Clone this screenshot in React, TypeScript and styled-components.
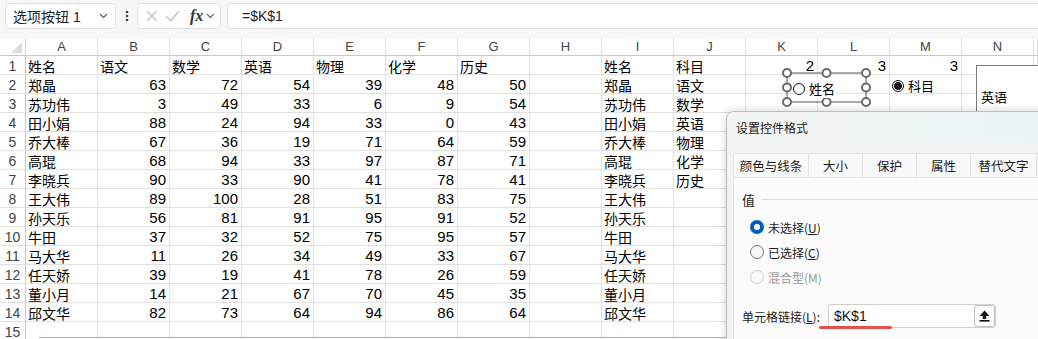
import styled, { createGlobalStyle } from 'styled-components';

const GlobalStyle = createGlobalStyle`
  html, body {
    margin: 0;
    padding: 0;
    background: #fff;
    overflow: hidden;
  }
  body {
    font-family: "Liberation Sans", "Noto Sans CJK SC", sans-serif;
    color: #000;
  }
`;

const COLS = ['A', 'B', 'C', 'D', 'E', 'F', 'G', 'H', 'I', 'J', 'K', 'L', 'M', 'N'];
const SUBJECTS = ['语文', '数学', '英语', '物理', '化学', '历史'];

const ROWS: [string, ...number[]][] = [
  ['郑晶', 63, 72, 54, 39, 48, 50],
  ['苏功伟', 3, 49, 33, 6, 9, 54],
  ['田小娟', 88, 24, 94, 33, 0, 43],
  ['乔大棒', 67, 36, 19, 71, 64, 59],
  ['高琨', 68, 94, 33, 97, 87, 71],
  ['李晓兵', 90, 33, 90, 41, 78, 41],
  ['王大伟', 89, 100, 28, 51, 83, 75],
  ['孙天乐', 56, 81, 91, 95, 91, 52],
  ['牛田', 37, 32, 52, 75, 95, 57],
  ['马大华', 11, 26, 34, 49, 33, 67],
  ['任天娇', 39, 19, 41, 78, 26, 59],
  ['董小月', 14, 21, 67, 70, 45, 35],
  ['邱文华', 82, 73, 64, 94, 86, 64],
];

type CellValue = string | number | null;

function buildSheet(): CellValue[][] {
  const sheet: CellValue[][] = [];
  sheet.push(['姓名', ...SUBJECTS, null, '姓名', '科目', 2, 3, 3, null]);
  ROWS.forEach((r, i) => {
    sheet.push([...r, null, r[0], SUBJECTS[i] ?? null, null, null, null, null]);
  });
  sheet.push(Array(14).fill(null));
  return sheet;
}

export default function App() {
  const sheet = buildSheet();

  return (
    <Page>
      <GlobalStyle />
      <Toolbar>
        <NameBox>
          <span>选项按钮 1</span>
          <Chevron />
        </NameBox>
        <Dots>
          <svg width="4" height="14" viewBox="0 0 4 14">
            <circle cx="2" cy="3" r="1.3" fill="#444" />
            <circle cx="2" cy="7" r="1.3" fill="#444" />
            <circle cx="2" cy="11" r="1.3" fill="#444" />
          </svg>
        </Dots>
        <FxBox>
          <svg width="14" height="14" viewBox="0 0 14 14">
            <path d="M2 2 L12 12 M12 2 L2 12" stroke="#b8b8b8" strokeWidth="1.2" fill="none" />
          </svg>
          <svg width="16" height="14" viewBox="0 0 16 14">
            <path d="M1.5 7.5 L6 12 L14.5 2" stroke="#b8b8b8" strokeWidth="1.2" fill="none" />
          </svg>
          <FxLabel>fx</FxLabel>
          <Chevron />
        </FxBox>
        <FormulaBox>=$K$1</FormulaBox>
      </Toolbar>

      <Sheet>
        <Corner>
          <svg width="11" height="11" viewBox="0 0 11 11">
            <polygon points="11,0 11,11 0,11" fill="#dcdcdc" />
          </svg>
        </Corner>
        {COLS.map((c) => (
          <ColHead key={c}>{c}</ColHead>
        ))}
        <ColHead />
        {sheet.map((row, ri) => (
          <Row key={ri}>
            <RowHead>{ri + 1}</RowHead>
            {row.map((v, ci) => (
              <Cell key={ci} $numeric={typeof v === 'number'}>
                {v}
              </Cell>
            ))}
            <Cell $numeric={false} />
          </Row>
        ))}
      </Sheet>

      <ShapeFrame>
        <svg width="90" height="40" viewBox="0 0 90 40">
          <rect x="5" y="5" width="79" height="29" fill="none" stroke="#555" strokeWidth="1" />
          {[5, 44.5, 84].flatMap((x) =>
            [5, 19.5, 34].map((y) =>
              x === 44.5 && y === 19.5 ? null : (
                <circle key={`${x}-${y}`} cx={x} cy={y} r="4" fill="#fff" stroke="#6a6a6a" strokeWidth="2" />
              )
            )
          )}
        </svg>
        <OptionLabel>
          <OptionDot $checked={false} />
          姓名
        </OptionLabel>
      </ShapeFrame>

      <SubjectOption>
        <OptionDot $checked />
        科目
      </SubjectOption>

      <ListBox>
        <ListItem>英语</ListItem>
      </ListBox>

      <BottomEdge />

      <Dialog>
        <TitleBar>设置控件格式</TitleBar>
        <DialogBody>
          <Tabs>
            <Tab $w={76}>颜色与线条</Tab>
            <Tab $w={54}>大小</Tab>
            <Tab $w={54}>保护</Tab>
            <Tab $w={54}>属性</Tab>
            <Tab $w={66}>替代文字</Tab>
          </Tabs>
          <Panel>
            <Legend>
              <span>值</span>
              <LegendLine />
            </Legend>
            <RadioList>
              <RadioRow>
                <Radio $state="checked" />
                <span>未选择(<u>U</u>)</span>
              </RadioRow>
              <RadioRow>
                <Radio $state="off" />
                <span>已选择(<u>C</u>)</span>
              </RadioRow>
              <RadioRow $disabled>
                <Radio $state="disabled" />
                <span>混合型(M)</span>
              </RadioRow>
            </RadioList>
            <LinkRow>
              <span>单元格链接(<u>L</u>):</span>
              <LinkInput>
                <span>$K$1</span>
                <CollapseButton>
                  <svg width="11" height="12" viewBox="0 0 11 12">
                    <polygon points="5.5,0.5 0.5,6 3.8,6 3.8,9 7.2,9 7.2,6 10.5,6" fill="#111" />
                    <rect x="0.5" y="10" width="10" height="1.6" fill="#111" />
                  </svg>
                </CollapseButton>
              </LinkInput>
            </LinkRow>
          </Panel>
        </DialogBody>
      </Dialog>

      <RedMark />
    </Page>
  );
}

function Chevron() {
  return (
    <svg width="9" height="6" viewBox="0 0 9 6">
      <path d="M1 1 L4.5 4.5 L8 1" stroke="#555" strokeWidth="1.1" fill="none" />
    </svg>
  );
}

const Page = styled.div`
  position: relative;
  width: 1038px;
  height: 339px;
  overflow: hidden;
`;

const Toolbar = styled.div`
  display: flex;
  align-items: flex-start;
  height: 38px;
  padding: 3px 0 0 5px;
  box-sizing: border-box;
  background: #f7f7f7;
`;

const BoxBase = styled.div`
  display: flex;
  align-items: center;
  height: 26px;
  box-sizing: border-box;
  background: #fff;
  border: 1px solid #e1e1e1;
  border-radius: 4px;
`;

const NameBox = styled(BoxBase)`
  width: 111px;
  padding: 0 7px 0 7px;
  justify-content: space-between;
  font-size: 14px;
  color: #222;
`;

const Dots = styled.div`
  display: flex;
  align-items: center;
  justify-content: center;
  width: 21px;
  height: 26px;
`;

const FxBox = styled(BoxBase)`
  width: 84px;
  padding: 0 5px 0 7px;
  gap: 6px;
`;

const FxLabel = styled.span`
  font-family: "Liberation Serif", serif;
  font-style: italic;
  font-weight: bold;
  font-size: 16px;
  color: #333;
  margin-left: 4px;
  margin-right: -3px;
`;

const FormulaBox = styled(BoxBase)`
  flex: 1;
  margin-left: 6px;
  border-right: none;
  border-radius: 4px 0 0 4px;
  padding-left: 14px;
  font-size: 14px;
  color: #222;
`;

const Sheet = styled.div`
  display: grid;
  grid-template-columns: 26px repeat(14, 72px) 4px;
  grid-template-rows: 18px repeat(15, 19px);
  font-size: 14px;
`;

const Row = styled.div`
  display: contents;
`;

const Corner = styled.div`
  display: flex;
  align-items: flex-end;
  justify-content: flex-end;
  padding: 0 3px 2px 0;
  border-right: 1px solid #d0d0d0;
  border-bottom: 1px solid #c8c8c8;
`;

const ColHead = styled.div`
  display: flex;
  align-items: center;
  justify-content: center;
  font-size: 13px;
  color: #444;
  border-right: 1px solid #e1e1e1;
  border-bottom: 1px solid #c8c8c8;
`;

const RowHead = styled.div`
  display: flex;
  align-items: center;
  justify-content: center;
  padding-top: 1px;
  font-size: 14px;
  color: #444;
  border-right: 1px solid #c8c8c8;
  border-bottom: 1px solid #e1e1e1;
`;

const Cell = styled.div<{ $numeric: boolean }>`
  display: flex;
  align-items: center;
  justify-content: ${(p) => (p.$numeric ? 'flex-end' : 'flex-start')};
  padding: ${(p) => (p.$numeric ? '1px 3px 0 0' : '1px 0 0 2px')};
  font-size: ${(p) => (p.$numeric ? '15px' : '14px')};
  white-space: nowrap;
  overflow: hidden;
  border-right: 1px solid #e1e1e1;
  border-bottom: 1px solid #e1e1e1;
`;

const ShapeFrame = styled.div`
  position: absolute;
  left: 782px;
  top: 68px;
  width: 90px;
  height: 40px;

  svg {
    display: block;
  }
`;

const OptionLabel = styled.div`
  position: absolute;
  left: 11px;
  top: 11px;
  display: flex;
  align-items: center;
  gap: 4px;
  font-size: 13px;
  background: #fff;
  padding-right: 2px;
`;

const OptionDot = styled.span<{ $checked: boolean }>`
  width: 12px;
  height: 12px;
  box-sizing: border-box;
  border-radius: 50%;
  border: 1px solid #111;
  background: ${(p) => (p.$checked ? 'radial-gradient(circle, #111 0 3.6px, #fff 4.2px)' : '#fff')};
`;

const SubjectOption = styled.div`
  position: absolute;
  left: 892px;
  top: 76px;
  display: flex;
  align-items: center;
  gap: 4px;
  font-size: 13px;
`;

const ListBox = styled.div`
  position: absolute;
  left: 976px;
  top: 65px;
  width: 80px;
  height: 60px;
  background: #fff;
  border-left: 1px solid #7a7a7a;
  border-top: 1px solid #7a7a7a;
  padding: 21px 0 0 4px;
  box-sizing: border-box;
`;

const ListItem = styled.div`
  font-size: 13px;
`;

const BottomEdge = styled.div`
  position: absolute;
  left: 39px;
  top: 337px;
  width: 700px;
  height: 3px;
  border-top: 1px solid #b4b4b4;
  background: #f2f2f2;
`;

const Dialog = styled.div`
  position: absolute;
  left: 726px;
  top: 111px;
  width: 340px;
  height: 300px;
  display: flex;
  flex-direction: column;
  border: 1px solid #bdbdbd;
  border-radius: 8px 0 0 0;
  background: #f3f3f3;
  box-shadow: 0 0 8px rgba(0, 0, 0, 0.18);
  overflow: hidden;
  font-family: "Noto Sans CJK SC", "Liberation Sans", sans-serif;
  font-size: 12px;
  color: #1b1b1b;
`;

const TitleBar = styled.div`
  flex-shrink: 0;
  display: flex;
  align-items: center;
  height: 31px;
  padding-left: 9px;
  background: linear-gradient(90deg, #f3f3f3 0%, #eef6f4 55%, #e6f5f3 100%);
`;

const DialogBody = styled.div`
  flex: 1;
  padding: 10px 0 0 6px;
`;

const Tabs = styled.div`
  display: flex;
  height: 25px;
`;

const Tab = styled.div<{ $w: number }>`
  width: ${(p) => p.$w}px;
  display: flex;
  align-items: center;
  justify-content: center;
  box-sizing: border-box;
  background: #f9f9f9;
  border-top: 1px solid #e4e4e4;
  border-right: 1px solid #e4e4e4;
  border-bottom: 1px solid #e4e4e4;
  font-size: 12.5px;

  &:first-child {
    border-left: 1px solid #e4e4e4;
  }
`;

const Panel = styled.div`
  height: 220px;
  background: #fbfbfb;
  border-left: 1px solid #e4e4e4;
  padding: 12px 0 0 8px;
  display: flex;
  flex-direction: column;
`;

const Legend = styled.div`
  display: flex;
  align-items: center;
  gap: 6px;
  height: 18px;
  font-size: 13px;
`;

const LegendLine = styled.div`
  flex: 1;
  height: 1px;
  background: #dcdcdc;
`;

const RadioList = styled.div`
  display: flex;
  flex-direction: column;
  gap: 7px;
  margin-top: 10px;
  padding-left: 8px;
`;

const RadioRow = styled.div<{ $disabled?: boolean }>`
  display: flex;
  align-items: center;
  gap: 4px;
  height: 18px;
  font-size: 12px;
  color: ${(p) => (p.$disabled ? '#9a9a9a' : '#1b1b1b')};
`;

const Radio = styled.span<{ $state: 'checked' | 'off' | 'disabled' }>`
  width: 14px;
  height: 14px;
  box-sizing: border-box;
  border-radius: 50%;
  ${(p) =>
    p.$state === 'checked'
      ? 'background: radial-gradient(circle, #fff 0 2.8px, #005fb8 3.4px); border: none;'
      : p.$state === 'off'
      ? 'background: #f6f6f6; border: 1px solid #7a7a7a;'
      : 'background: #f9f9f9; border: 1px solid #cfcfcf;'}
`;

const LinkRow = styled.div`
  display: flex;
  align-items: center;
  height: 24px;
  margin-top: 18px;
  gap: 2px;
  font-size: 12px;

  > span {
    width: 84px;
  }
`;

const LinkInput = styled.div`
  display: flex;
  align-items: center;
  justify-content: space-between;
  width: 168px;
  height: 24px;
  box-sizing: border-box;
  background: #fff;
  border: 1px solid #cfcfcf;
  border-radius: 3px;
  padding: 0 0 0 5px;
  font-family: "Liberation Sans", sans-serif;
  font-size: 14px;
  color: #111;
`;

const CollapseButton = styled.div`
  display: flex;
  align-items: center;
  justify-content: center;
  width: 21px;
  height: 22px;
  box-sizing: border-box;
  border: 1px solid #c4c4c4;
  border-radius: 3px;
  background: #fdfdfd;
`;

const RedMark = styled.div`
  position: absolute;
  left: 819px;
  top: 326px;
  width: 73px;
  height: 3px;
  border-radius: 2px;
  background: #e5514f;
`;
